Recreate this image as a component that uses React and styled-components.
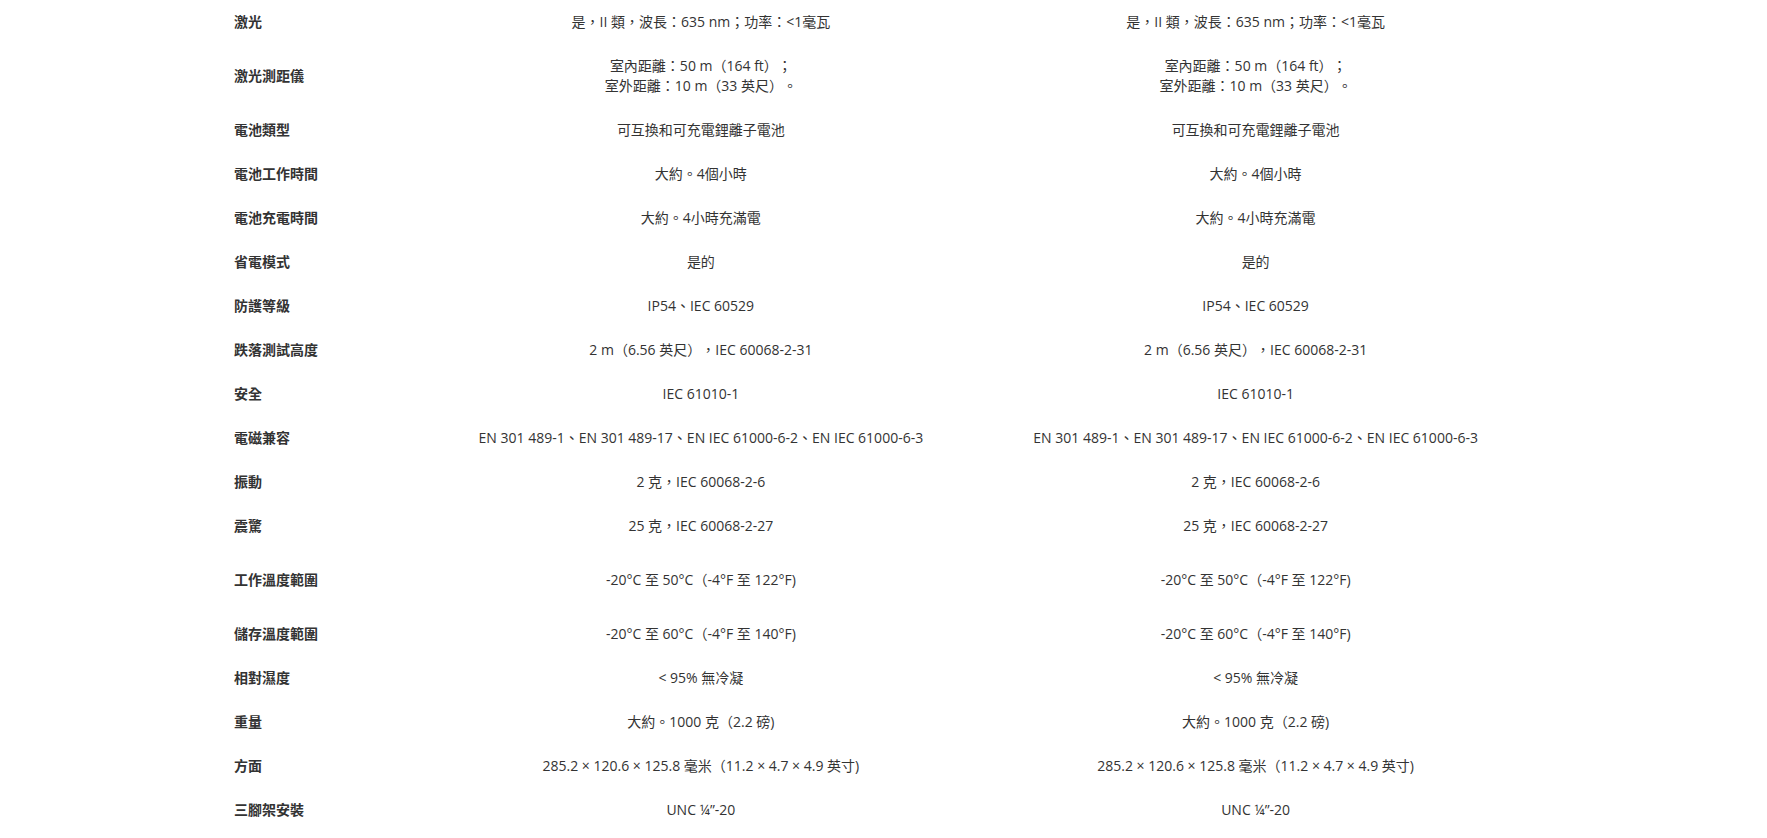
import React from "react";
import styled, { createGlobalStyle } from "styled-components";

const Global = createGlobalStyle`
  html, body { margin: 0; padding: 0; background: #fff; }
  body {
    font-family: "Open Sans", "Noto Sans CJK TC", sans-serif;
    color: #333;
    font-size: 14px;
    text-spacing-trim: space-all;
  }
`;

const Page = styled.div`
  display: flex;
  justify-content: center;
  padding: 0 234px;
`;

const Table = styled.div`
  width: 1299px;
  display: grid;
  grid-template-columns: 189.5px 1fr 1fr;
`;

const Row = styled.div`
  display: contents;
`;

const Cell = styled.div`
  display: flex;
  align-items: center;
  justify-content: ${(p) => (p.$label ? "flex-start" : "center")};
  text-align: ${(p) => (p.$label ? "left" : "center")};
  font-weight: ${(p) => (p.$label ? 700 : 400)};
  line-height: 20px;
  min-height: 20px;
  padding: ${(p) => (p.$tall ? "22px 0 12px" : "12px 0")};
`;

const rows = [
  ["激光", "是，II 類，波長：635 nm；功率：<1毫瓦"],
  ["激光測距儀", ["室內距離：50 m（164 ft）；", "室外距離：10 m（33 英尺）。"]],
  ["電池類型", "可互換和可充電鋰離子電池"],
  ["電池工作時間", "大約。4個小時"],
  ["電池充電時間", "大約。4小時充滿電"],
  ["省電模式", "是的"],
  ["防護等級", "IP54、IEC 60529"],
  ["跌落測試高度", "2 m（6.56 英尺），IEC 60068-2-31"],
  ["安全", "IEC 61010-1"],
  ["電磁兼容", "EN 301 489-1、EN 301 489-17、EN IEC 61000-6-2、EN IEC 61000-6-3"],
  ["振動", "2 克，IEC 60068-2-6"],
  ["震驚", "25 克，IEC 60068-2-27"],
  ["工作溫度範圍", "-20°C 至 50°C（-4°F 至 122°F)", true],
  ["儲存溫度範圍", "-20°C 至 60°C（-4°F 至 140°F)", true],
  ["相對濕度", "< 95% 無冷凝"],
  ["重量", "大約。1000 克（2.2 磅)"],
  ["方面", "285.2 × 120.6 × 125.8 毫米（11.2 × 4.7 × 4.9 英寸)"],
  ["三腳架安裝", "UNC ¼”-20"],
];

const renderValue = (v) =>
  Array.isArray(v) ? (
    <span>
      {v.map((line, i) => (
        <React.Fragment key={i}>
          {i > 0 && <br />}
          {line}
        </React.Fragment>
      ))}
    </span>
  ) : (
    v
  );

export default function App() {
  return (
    <>
      <Global />
      <Page>
        <Table>
          {rows.map(([label, value, tall]) => (
            <Row key={label}>
              <Cell $label $tall={tall}>{label}</Cell>
              <Cell $tall={tall}>{renderValue(value)}</Cell>
              <Cell $tall={tall}>{renderValue(value)}</Cell>
            </Row>
          ))}
        </Table>
      </Page>
    </>
  );
}
